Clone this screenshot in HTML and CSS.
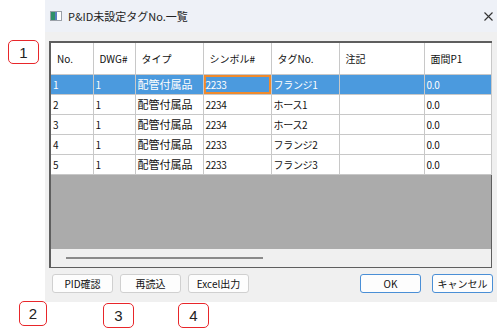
FILE: index.html
```html
<!DOCTYPE html>
<html lang="ja">
<head>
  <meta charset="UTF-8">
  <title>P&amp;ID未設定タグNo.一覧</title>
  <link rel="stylesheet" href="styles.css">
</head>
<body>
  <div class="page">
    <div class="window">
      <div class="titlebar">
        <span class="title-icon"></span>
        <span class="title-text">P&amp;ID未設定タグNo.一覧</span>
        <svg class="close" width="9" height="9" viewBox="0 0 9 9">
          <path d="M0.5 0.5 L8.5 8.5 M8.5 0.5 L0.5 8.5" stroke="#333" stroke-width="1.1" fill="none"/>
        </svg>
      </div>

      <div class="window-body">
        <div class="grid">
          <table class="grid-table">
            <thead>
              <tr>
                <th class="c-no">No.</th>
                <th class="c-dwg">DWG#</th>
                <th class="c-type">タイプ</th>
                <th class="c-sym">シンボル#</th>
                <th class="c-tag">タグNo.</th>
                <th class="c-note">注記</th>
                <th class="c-p1">面間P1</th>
              </tr>
            </thead>
            <tbody>
              <tr class="selected">
                <td>1</td><td>1</td><td class="type">配管付属品</td><td class="current">2233</td><td>フランジ1</td><td></td><td>0.0</td>
              </tr>
              <tr>
                <td>2</td><td>1</td><td class="type">配管付属品</td><td>2234</td><td>ホース1</td><td></td><td>0.0</td>
              </tr>
              <tr>
                <td>3</td><td>1</td><td class="type">配管付属品</td><td>2234</td><td>ホース2</td><td></td><td>0.0</td>
              </tr>
              <tr>
                <td>4</td><td>1</td><td class="type">配管付属品</td><td>2233</td><td>フランジ2</td><td></td><td>0.0</td>
              </tr>
              <tr>
                <td>5</td><td>1</td><td class="type">配管付属品</td><td>2233</td><td>フランジ3</td><td></td><td>0.0</td>
              </tr>
            </tbody>
          </table>
          <div class="grid-empty"></div>
          <div class="hscroll"><span class="hscroll-thumb"></span></div>
        </div>

        <div class="buttons">
          <div class="btn-group">
            <button class="btn">PID確認</button>
            <button class="btn">再読込</button>
            <button class="btn">Excel出力</button>
          </div>
          <div class="btn-group right">
            <button class="btn default">OK</button>
            <button class="btn default">キャンセル</button>
          </div>
        </div>
      </div>
    </div>

    <!-- callout numbers -->
    <span class="callout n1">1</span>
    <span class="callout n2">2</span>
    <span class="callout n3">3</span>
    <span class="callout n4">4</span>
  </div>
</body>
</html>
```

FILE: styles.css
```css
* {
  margin: 0;
  padding: 0;
  box-sizing: border-box;
}

body {
  background-color: white;
  font-family: "Noto Sans CJK JP", "Noto Sans", sans-serif;
  color: #111;
}

.page {
  position: relative;
  width: 500px;
  height: 336px;
}

.window {
  margin-left: 45px;
  width: 452px;
  height: 302px;
  background-color: #f0f0f0;
  display: flex;
  flex-direction: column;
}

.titlebar {
  height: 32px;
  background-color: #eef1f7;
  display: flex;
  align-items: center;
  padding-left: 5px;
  padding-right: 4px;
}

.title-icon {
  width: 12px;
  height: 10px;
  margin-right: 6px;
  margin-top: -1px;
  border: 1px solid #9aa0a8;
  background: linear-gradient(90deg, #2f8f6a 0, #2f8f6a 4px, #5b7fc0 4px, #5b7fc0 6px, #ffffff 6px);
}

.title-text {
  font-size: 11px;
  color: #222;
  flex: 1;
}

.close {
  display: block;
}

.window-body {
  flex: 1;
  padding: 9px 4px 0 4px;
  display: flex;
  flex-direction: column;
}

.grid {
  width: 443px;
  height: 227px;
  border: 2px solid #5e5e5e;
  border-right-width: 1px;
  border-bottom-width: 1px;
  display: flex;
  flex-direction: column;
  background-color: #ababab;
}

.grid-table {
  border-collapse: collapse;
  background-color: white;
  font-size: 10px;
  table-layout: fixed;
  width: 440px;
}

.grid-table th,
.grid-table td {
  border-right: 1px solid #c8c8c8;
  border-bottom: 1px solid #c8c8c8;
  text-align: left;
  font-weight: normal;
  white-space: nowrap;
  overflow: hidden;
}

.grid-table th {
  height: 31px;
  padding-left: 6px;
  font-size: 10px;
}

.grid-table td {
  height: 20px;
  padding-left: 2px;
  letter-spacing: -0.3px;
}

.grid-table td.type {
  font-size: 11px;
  padding-left: 2px;
  letter-spacing: 0;
}

.c-no { width: 42px; }
.c-dwg { width: 42px; }
.c-type { width: 68px; }
.c-sym { width: 68px; }
.c-tag { width: 68px; }
.c-note { width: 85px; }
.c-p1 { width: 67px; }

.grid-table tr.selected td {
  background-color: #4b9ade;
  color: white;
}

.grid-table tr.selected td.current {
  box-shadow: inset 0 0 0 2px #f08a2c;
}

.grid-empty {
  flex: 1;
}

.hscroll {
  height: 18px;
  background-color: #f0f0f0;
  display: flex;
  align-items: center;
  padding-left: 15px;
}

.hscroll-thumb {
  width: 197px;
  height: 2px;
  background-color: #8a8a8a;
}

.buttons {
  margin-top: 6px;
  display: flex;
  justify-content: space-between;
}

.btn-group {
  display: flex;
  gap: 7px;
  margin-left: 3px;
}

.btn-group.right {
  gap: 11px;
  margin-left: 0;
}

.btn {
  width: 61px;
  height: 19px;
  background-color: #fdfdfd;
  border: 1px solid #d0d0d0;
  border-radius: 3px;
  font-family: "Noto Sans CJK JP", "Noto Sans", sans-serif;
  font-size: 10px;
  color: #111;
}

.btn.default {
  border-color: #4a8fd6;
}

.callout {
  position: absolute;
  border: 1.5px solid #e8262a;
  border-radius: 5px;
  background-color: white;
  font-family: "Liberation Sans", sans-serif;
  font-size: 15px;
  color: #222;
  display: flex;
  align-items: center;
  justify-content: center;
}

.n1 { left: 8px; top: 40px; width: 31px; height: 24px; }
.n2 { left: 19px; top: 301px; width: 28px; height: 25px; }
.n3 { left: 103px; top: 303px; width: 31px; height: 25px; }
.n4 { left: 178px; top: 303px; width: 31px; height: 25px; }
```
